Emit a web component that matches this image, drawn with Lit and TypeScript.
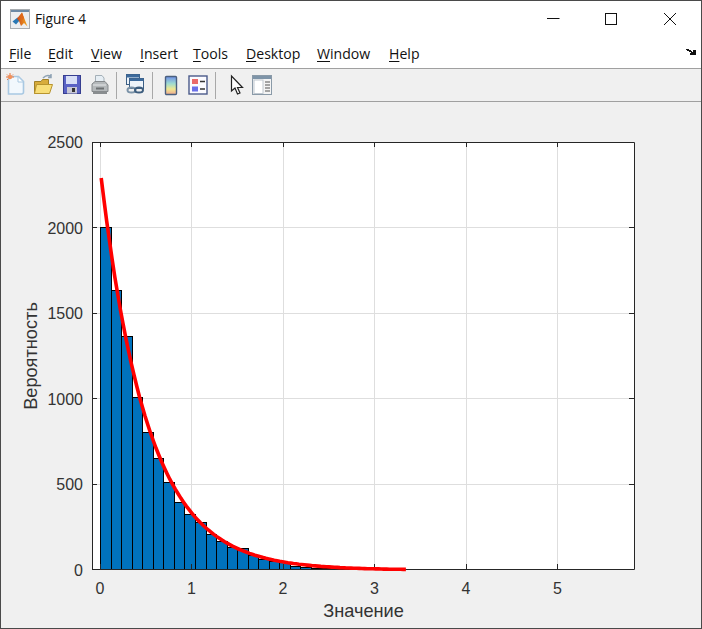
import { LitElement, html, css, svg } from "lit";
import { customElement } from "lit/decorators.js";

const X0 = 100, XS = 91.5, Y0 = 570, YS = 428 / 2500;
const L = 92, R = 634, T = 142, B = 569;
const tops = [227,290,336,397,432,458,482,502,514,522,534,541,547,548,555,559,561,562,566,567,568,568,569,569,569,569];
const xTicks = [0,1,2,3,4,5];
const yTicks = [0,500,1000,1500,2000,2500];
const px = (v:number)=>X0+v*XS;
const py = (v:number)=>Y0-v*YS;
const gx = (v:number)=>Math.floor(px(v))+.5;
const gy = (v:number)=>Math.min(Math.floor(py(v)),B)+.5;
const edge = (i:number)=>Math.round(100+i*10.55)+0.5;

function curve(){
  const pts:string[]=[];
  for(let v=0.01;v<=3.34;v+=0.03){
    pts.push(`${(px(v)+.3).toFixed(1)},${py(2335*Math.exp(-1.95*v)).toFixed(1)}`);
  }
  return pts.join(" ");
}

const menus:[string,string][]=[["F","ile"],["E","dit"],["V","iew"],["I","nsert"],["T","ools"],["D","esktop"],["W","indow"],["H","elp"]];

@customElement("app-root")
export class AppRoot extends LitElement {
  static styles = css`
    :host{display:block;width:702px;height:629px;overflow:hidden}
    .win{box-sizing:border-box;width:702px;height:629px;border:1px solid #4a4a4a;background:#f0f0f0;display:flex;flex-direction:column;font-family:"Open Sans","Noto Sans",sans-serif;color:#111}
    .title{height:35px;background:#fff;display:flex;align-items:center;padding-left:9px;flex:none}
    .title .logo{display:block;margin-right:5px}
    .title .name{font-size:13.7px;flex:1}
    .ctl{width:58.5px;height:35px;display:flex;align-items:center;justify-content:center}
    .menu{height:32px;background:#fff;display:flex;align-items:center;padding-left:8px;font-size:14.1px;flex:none;position:relative;border-bottom:1px solid #a0a0a0;box-sizing:content-box}
    .menu span.m{display:block;padding-top:3px}
    .menu u{text-decoration:underline;text-underline-offset:2px;text-decoration-thickness:1px}
    .grip{position:absolute;left:685px;top:12px;display:block}
    .tools{height:32px;background:#f0f0f0;border-bottom:1px solid #a0a0a0;display:flex;align-items:center;flex:none;position:relative;padding-left:4px}
    .tools svg{display:block;flex:none}
    .sep{width:1px;height:27px;background:#a8a8a8;flex:none;margin-top:1px}
    .fig{flex:1;display:block}
    .fig svg{display:block}
    text{font-family:"Liberation Sans",Arial,sans-serif;fill:#333}
    .tick{font-size:16px}
    .label{font-size:18.2px}
  `;

  icon(w:number,ml:number,body:unknown){
    return html`<svg width=${w} height="24" viewBox="0 0 ${w} 24" style="margin-left:${ml}px">${body}</svg>`;
  }

  render(){
    const widths=[39,43,49,53,53,71,72,40];
    return html`<div class="win">
      <div class="title">
        <svg class="logo" width="20" height="20" viewBox="0 0 20 20">
          <defs><linearGradient id="ms" x1="0" y1="0" x2="1" y2="0"><stop offset="0" stop-color="#c9481a"/><stop offset="1" stop-color="#f4a820"/></linearGradient></defs>
          <rect x=".5" y=".5" width="19" height="19" fill="#eceef0" stroke="#a8acb0"/>
          <rect x="1" y="1" width="18" height="2" fill="#6d8aa6"/>
          <path d="M2.5 12.5 L7.5 8.5 L10 11 L6 15.5 Z" fill="#2a78b4"/>
          <path d="M7 9.5 L12 3.5 L17.5 17.5 L14 14 L11 17 L9 12 Z" fill="url(#ms)"/>
          <path d="M12 3.5 L14 9 L12.5 11 L10 7 Z" fill="#e06a1c"/>
        </svg>
        <div class="name">Figure 4</div>
        <div class="ctl"><svg width="14" height="14"><path d="M1 6.5H13.5" stroke="#111" fill="none"/></svg></div>
        <div class="ctl"><svg width="14" height="14"><rect x="1.5" y="1.5" width="11" height="11" stroke="#111" fill="none"/></svg></div>
        <div class="ctl" style="margin-right:2px"><svg width="14" height="14"><path d="M1 1L13 13M13 1L1 13" stroke="#111" fill="none"/></svg></div>
      </div>
      <div class="menu">
        ${menus.map((m,i)=>html`<span class="m" style="width:${widths[i]}px"><u>${m[0]}</u>${m[1]}</span>`)}
        <svg class="grip" width="11" height="8" viewBox="0 0 11 8"><path d="M0 1H3V2H5V3H6V4H7V2H10V7H4V5H5V4H3V3H1V2H0Z" fill="#111"/></svg>
      </div>
      <div class="tools">
        ${this.icon(20,0,svg`
          <path d="M3.5 3.5H13.5L18.5 8.5V19Q18.5 21 16.5 21H3.5Z" fill="#f2f8fd" stroke="#a8c8e2" stroke-width="1.6"/>
          <path d="M13 3.5V9H18.5Z" fill="#fff" stroke="#a8c8e2"/>
          <path d="M1 4H3M5 0V2M2 1.5L3 2.5M8 1.5L7 2.5M2 7L3 6M7 4H9" stroke="#e8743c"/>
          <circle cx="5" cy="4" r="2.2" fill="#f3915a"/>`)}
        ${this.icon(21,7.5,svg`
          <path d="M1.5 8.5H8L9.5 6.5H15.5V20.5H1.5Z" fill="#d8ac3c" stroke="#a08028"/>
          <path d="M1.5 20.5L3.5 11.5H19.5L16.5 20.5Z" fill="#f8de78" stroke="#b8942e"/>
          <path d="M10 5Q14 1 18 3.5M18 1V4.5H15" stroke="#8fa3b5" stroke-width="1.5" fill="none"/>`)}
        ${this.icon(20,8,svg`
          <rect x="1.5" y="2.5" width="17" height="18" fill="#5a62c4" stroke="#363e90"/>
          <rect x="4" y="3" width="11" height="8" fill="#d8dff6"/>
          <rect x="5" y="14" width="10" height="6.5" fill="#c8c8d6"/>
          <rect x="10" y="15" width="3" height="4" fill="#333"/>`)}
        ${this.icon(19,8,svg`
          <path d="M5.5 2.5H12L14 5V10H5.5Z" fill="#e6eef4" stroke="#a4b0b8"/>
          <path d="M2 11L5 8.5H15L18 12V18.5H2Z" fill="#b4b8ba" stroke="#85898c"/>
          <path d="M3 18.5H17V21H3Z" fill="#8a8e90"/>
          <path d="M3 12H16" stroke="#e6e8ea"/><rect x="6" y="14.5" width="8" height="2" fill="#6c7072"/>`)}
        <div class="sep" style="margin-left:7px"></div>
        ${this.icon(20,8,svg`
          <rect x="1.5" y="1.5" width="13" height="10" fill="#eef4fa" stroke="#3c5f85"/>
          <rect x="1.5" y="1.5" width="13" height="3" fill="#3c6a9c"/>
          <rect x="4.5" y="5.5" width="14" height="10" fill="#eef4fa" stroke="#3c5f85"/>
          <rect x="4.5" y="5.5" width="14" height="2.5" fill="#3c6a9c"/>
          <ellipse cx="6.5" cy="17" rx="4" ry="2.6" fill="none" stroke="#7b93a8" stroke-width="2"/>
          <ellipse cx="14" cy="17" rx="4" ry="2.6" fill="none" stroke="#3d5d7e" stroke-width="2"/>`)}
        <div class="sep" style="margin-left:7px"></div>
        <svg width="14" height="24" viewBox="0 0 14 24" style="margin-left:11px">
          <defs><linearGradient id="cb" x1="0" y1="0" x2="0" y2="1"><stop offset="0" stop-color="#6f8fe8"/><stop offset=".4" stop-color="#9fdcd0"/><stop offset=".7" stop-color="#f0e890"/><stop offset="1" stop-color="#f0a890"/></linearGradient></defs>
          <rect x="1.5" y="3.5" width="11" height="18" rx="1" fill="url(#cb)" stroke="#4a5f7e" stroke-width="1.4"/>
        </svg>
        ${this.icon(20,10,svg`
          <rect x="1" y="3" width="18" height="18" fill="#fbfbff" stroke="#4a5a8a" stroke-width="1.4"/>
          <rect x="4" y="6" width="6" height="5" fill="#ea6a6a"/>
          <rect x="4" y="13.5" width="6" height="5" fill="#6a70e8"/>
          <path d="M12 8.5H17M12 16H17" stroke="#333" stroke-width="1.5"/>`)}
        <div class="sep" style="margin-left:7px"></div>
        ${this.icon(14,14,svg`
          <path d="M1.5 3V18L5 15L7.5 21L10 20L7.5 14.5L12.5 14.5Z" fill="#fff" stroke="#222" stroke-width="1.2"/>`)}
        ${this.icon(20,8,svg`
          <rect x=".5" y="2.5" width="19" height="19" fill="#f4f4f4" stroke="#8a9aa8"/>
          <rect x="1" y="3" width="18" height="3" fill="#7e94a8"/>
          <rect x="2" y="7" width="9" height="13.5" fill="#fff" stroke="#c0c8d0"/>
          <path d="M13 9H18M13 12H18M13 15H18M13 18H18" stroke="#555"/>`)}
      </div>
      <div class="fig">
        <svg width="700" height="526" viewBox="1 102 700 526">
          <rect x=${L} y=${T} width=${R-L} height=${B-T} fill="#fff"/>
          ${xTicks.map(v=>svg`<path d="M${gx(v)} ${T}V${B}" stroke="#dedede"/>`)}
          ${yTicks.slice(1,5).map(v=>svg`<path d="M${L} ${gy(v)}H${R}" stroke="#dedede"/>`)}
          ${tops.map((t,i)=>svg`<rect x=${edge(i)} y=${Math.min(t,B)+.5} width=${edge(i+1)-edge(i)} height=${Math.max(B-t,0)} fill="#0072bd" stroke="#000"/>`)}
          <path d="M${L+.5} ${T+.5}H${R+.5}V${B+.5}H${L+.5}Z" fill="none" stroke="#262626"/>
          ${xTicks.map(v=>svg`<path d="M${gx(v)} ${B}v-5M${gx(v)} ${T}v5" stroke="#262626"/>`)}
          ${yTicks.map(v=>svg`<path d="M${L} ${gy(v)}h5M${R} ${gy(v)}h-5" stroke="#262626"/>`)}
          <polyline points=${curve()} fill="none" stroke="#ff0000" stroke-width="3.6"/>
          ${xTicks.map(v=>svg`<text class="tick" x=${px(v)} y="594" text-anchor="middle">${v}</text>`)}
          ${yTicks.map(v=>svg`<text class="tick" x="83" y=${py(v)+6} text-anchor="end">${v}</text>`)}
          <text class="label" x="363.5" y="617" text-anchor="middle">Значение</text>
          <text class="label" x="0" y="0" text-anchor="middle" transform="translate(37 356) rotate(-90)">Вероятность</text>
        </svg>
      </div>
    </div>`;
  }
}
